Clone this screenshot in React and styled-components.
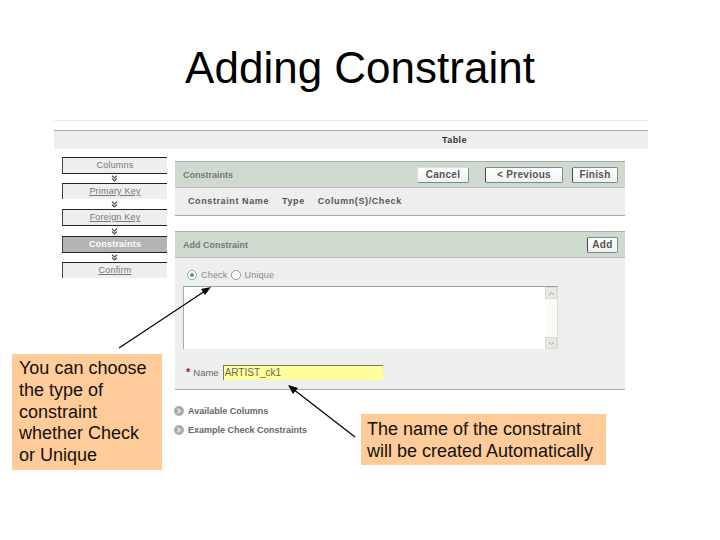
import styled, { createGlobalStyle } from "styled-components";

const GlobalStyle = createGlobalStyle`
	html, body {
		margin: 0;
		background: #fff;
		font-family: "Liberation Sans", Arial, sans-serif;
	}
`;

const Slide = styled.div`
	position: relative;
	width: 720px;
	height: 540px;
	overflow: hidden;
	background: #fff;
`;

const Title = styled.h1`
	margin: 0;
	padding-top: 43px;
	height: 120px;
	box-sizing: border-box;
	font-size: 44px;
	line-height: 50px;
	font-weight: 400;
	color: #000;
	text-align: center;
`;

const Rule = styled.div`
	margin-left: 54px;
	width: 594px;
	height: 1px;
	background: #e8e8e8;
`;

const TableStrip = styled.div`
	margin: 9px 0 0 54px;
	width: 594px;
	height: 19px;
	box-sizing: border-box;
	border-top: 1px solid #aaa;
	background: #eee;
	color: #333;
	font-size: 9px;
	font-weight: 700;
	line-height: 19px;
	letter-spacing: 0.4px;
	padding-left: 388px;
`;

const Columns = styled.div`
	display: flex;
	align-items: flex-start;
	margin-top: 8px;
`;

const LeftColumn = styled.div`
	width: 175px;
	flex: none;
`;

const Steps = styled.div`
	margin-left: 62px;
	width: 105px;
`;

const Step = styled.div`
	height: ${(p) => (p.$open ? 16 : 17)}px;
	box-sizing: border-box;
	border-left: 1px solid #444;
	border-top: 1px solid #222;
	border-bottom: ${(p) => (p.$open ? "none" : "1px solid #222")};
	background: ${(p) => (p.$active ? "#b4b4b4" : "#eee")};
	color: ${(p) => (p.$active ? "#fff" : "#777")};
	font-size: 9px;
	line-height: 15px;
	letter-spacing: 0.2px;
	font-weight: ${(p) => (p.$active ? 700 : 400)};
	text-align: center;
	text-decoration: ${(p) => (p.$link ? "underline" : "none")};
`;

const StepArrow = styled.div`
	display: flex;
	justify-content: center;
	align-items: center;
	height: ${(p) => (p.$tall ? 10 : 9)}px;
	color: #555;
`;

const Callout = styled.div`
	background: #fc9;
	color: #111;
	font-size: 18px;
	line-height: 22px;
	box-sizing: border-box;
`;

const LeftCallout = styled(Callout)`
	margin: 76px 0 0 12px;
	width: 150px;
	height: 116px;
	padding: 4px 0 0 7px;
	line-height: 21.8px;
`;

const MainColumn = styled.div`
	width: 450px;
	padding-top: 4px;
`;

const Panel = styled.section`
	background: #eee;
	border-bottom: 1px solid #aaa;
	margin-bottom: ${(p) => p.$gap || 0}px;
`;

const PanelHeader = styled.header`
	display: flex;
	align-items: center;
	height: 27px;
	box-sizing: border-box;
	padding: 0 7px 0 8px;
	background: #cfdacf;
	border-top: 1px solid #aaa;
	border-bottom: 1px solid #bbb;
	color: #777;
	font-size: 9px;
	font-weight: 700;
`;

const PanelTitle = styled.span`
	margin-right: auto;
`;

const HeaderButton = styled.button`
	width: ${(p) => p.$w}px;
	height: 16px;
	margin-left: ${(p) => p.$gap || 0}px;
	padding: 0;
	border: 1px solid #7a8a90;
	border-top-color: ${(p) => (p.$soft ? "#ddd" : "#7a8a90")};
	border-left-color: ${(p) => (p.$soft ? "#ddd" : "#445")};
	border-radius: 2px;
	background: linear-gradient(#fff, #f0f0f0);
	color: #555;
	font-family: inherit;
	font-size: 10px;
	font-weight: 700;
	letter-spacing: 0.3px;
	line-height: 14px;
`;

const ColumnHeads = styled.div`
	display: flex;
	height: 27px;
	box-sizing: border-box;
	padding: 8px 0 0 13px;
	color: #555;
	font-size: 9px;
	font-weight: 700;
	letter-spacing: 0.6px;
	line-height: 11px;
`;

const ColumnHead = styled.span`
	margin-right: ${(p) => p.$gap}px;
`;

const ChoiceRow = styled.div`
	display: flex;
	align-items: center;
	height: 28px;
	box-sizing: border-box;
	padding: 5px 0 0 12px;
	color: #888;
	font-size: 9px;
	letter-spacing: 0.2px;
`;

const Radio = styled.span`
	display: flex;
	align-items: center;
	justify-content: center;
	width: 10px;
	height: 10px;
	box-sizing: border-box;
	margin-right: 4px;
	border: 1px solid ${(p) => (p.$on ? "#8aa" : "#999")};
	border-radius: 50%;
	background: #fff;
	&::after {
		content: "";
		display: ${(p) => (p.$on ? "block" : "none")};
		width: 4px;
		height: 4px;
		border-radius: 50%;
		background: #5a9a6a;
	}
`;

const ChoiceLabel = styled.span`
	margin-right: 3px;
`;

const CheckArea = styled.div`
	display: flex;
	justify-content: flex-end;
	margin-left: 8px;
	width: 375px;
	height: 63px;
	box-sizing: border-box;
	border-top: 1px solid #9aa0b0;
	border-left: 1px solid #aab;
	background: #fff;
`;

const Scrollbar = styled.div`
	display: flex;
	flex-direction: column;
	justify-content: space-between;
	width: 12px;
	background: #fbfbf5;
	border-right: 1px solid #ddd;
`;

const ScrollButton = styled.div`
	display: flex;
	align-items: center;
	justify-content: center;
	height: 12px;
	background: #e8eae4;
	border: 1px solid #d8d8d8;
	box-sizing: border-box;
	color: #999;
`;

const NameRow = styled.div`
	display: flex;
	align-items: center;
	height: 40px;
	box-sizing: border-box;
	padding: 6px 0 0 11px;
	color: #666;
	font-size: 9.5px;
`;

const Required = styled.span`
	margin-right: 3px;
	color: #a01818;
	font-size: 11px;
	font-weight: 700;
`;

const NameLabel = styled.label`
	margin-right: 4px;
`;

const NameInput = styled.div`
	width: 160px;
	height: 15px;
	box-sizing: border-box;
	border-top: 1px solid #777;
	border-left: 1px solid #777;
	background: #ffff99;
	color: #666;
	font-size: 10px;
	line-height: 13px;
	padding-left: 1px;
`;

const BottomRow = styled.div`
	display: flex;
	align-items: flex-start;
`;

const Links = styled.div`
	display: flex;
	flex-direction: column;
	gap: 8px;
	width: 186px;
	padding-top: 15px;
	flex: none;
`;

const LinkItem = styled.div`
	display: flex;
	align-items: center;
	gap: 4px;
	height: 11px;
	color: #666;
	font-size: 9px;
	font-weight: 700;
`;

const LinkIcon = styled.svg`
	display: block;
	width: 10px;
	height: 10px;
	margin-left: -1px;
`;

const RightCallout = styled(Callout)`
	margin-top: 24px;
	width: 245px;
	height: 51px;
	flex: none;
	padding: 4px 0 0 6px;
`;

const Arrows = styled.svg`
	position: absolute;
	left: 0;
	top: 0;
	pointer-events: none;
`;

function ChevronsDown() {
	return (
		<svg width="7" height="7" viewBox="0 0 7 7" fill="none" stroke="currentColor" strokeWidth="1.3">
			<path d="M1 0.8 3.5 3 6 0.8M1 3.6 3.5 5.8 6 3.6" />
		</svg>
	);
}

function Caret({ up }) {
	return (
		<svg width="7" height="5" viewBox="0 0 7 5" fill="none" stroke="currentColor" strokeWidth="1">
			<path d={up ? "M1 4 3.5 1.5 6 4" : "M1 1 3.5 3.5 6 1"} />
		</svg>
	);
}

function RoundArrow() {
	return (
		<LinkIcon viewBox="0 0 10 10">
			<circle cx="5" cy="5" r="5" fill="#aaa" />
			<path d="M3.5 2.8 6 5 3.5 7.2" fill="none" stroke="#eee" strokeWidth="1.4" />
		</LinkIcon>
	);
}

function App() {
	return (
		<Slide>
			<GlobalStyle />
			<Title>Adding Constraint</Title>
			<Rule />
			<TableStrip>Table</TableStrip>
			<Columns>
				<LeftColumn>
					<Steps>
						<Step>Columns</Step>
						<StepArrow><ChevronsDown /></StepArrow>
						<Step $open $link>Primary Key</Step>
						<StepArrow $tall><ChevronsDown /></StepArrow>
						<Step $link>Foreign Key</Step>
						<StepArrow $tall><ChevronsDown /></StepArrow>
						<Step $active>Constraints</Step>
						<StepArrow><ChevronsDown /></StepArrow>
						<Step $open $link>Confirm</Step>
					</Steps>
					<LeftCallout>
						You can choose<br />the type of<br />constraint<br />whether Check<br />or Unique
					</LeftCallout>
				</LeftColumn>
				<MainColumn>
					<Panel $gap={15}>
						<PanelHeader>
							<PanelTitle>Constraints</PanelTitle>
							<HeaderButton $w={52} $soft>Cancel</HeaderButton>
							<HeaderButton $w={78} $gap={16}>&lt; Previous</HeaderButton>
							<HeaderButton $w={46} $gap={9}>Finish</HeaderButton>
						</PanelHeader>
						<ColumnHeads>
							<ColumnHead $gap={13}>Constraint Name</ColumnHead>
							<ColumnHead $gap={13}>Type</ColumnHead>
							<ColumnHead>Column(S)/Check</ColumnHead>
						</ColumnHeads>
					</Panel>
					<Panel>
						<PanelHeader>
							<PanelTitle>Add Constraint</PanelTitle>
							<HeaderButton $w={31}>Add</HeaderButton>
						</PanelHeader>
						<ChoiceRow>
							<Radio $on />
							<ChoiceLabel>Check</ChoiceLabel>
							<Radio />
							<ChoiceLabel>Unique</ChoiceLabel>
						</ChoiceRow>
						<CheckArea>
							<Scrollbar>
								<ScrollButton><Caret up /></ScrollButton>
								<ScrollButton><Caret /></ScrollButton>
							</Scrollbar>
						</CheckArea>
						<NameRow>
							<Required>*</Required>
							<NameLabel>Name</NameLabel>
							<NameInput>ARTIST_ck1</NameInput>
						</NameRow>
					</Panel>
					<BottomRow>
						<Links>
							<LinkItem><RoundArrow />Available Columns</LinkItem>
							<LinkItem><RoundArrow />Example Check Constraints</LinkItem>
						</Links>
						<RightCallout>
							The name of the constraint<br />will be created Automatically
						</RightCallout>
					</BottomRow>
				</MainColumn>
			</Columns>
			<Arrows width="720" height="540" viewBox="0 0 720 540">
				<path d="M119 348 205 291" stroke="#000" strokeWidth="1.2" fill="none" />
				<path d="M211 287 201 289 205 295Z" fill="#000" />
				<path d="M355 437 293 389" stroke="#000" strokeWidth="1.2" fill="none" />
				<path d="M288 385 293 394 298 388Z" fill="#000" />
			</Arrows>
		</Slide>
	);
}

export default App;
